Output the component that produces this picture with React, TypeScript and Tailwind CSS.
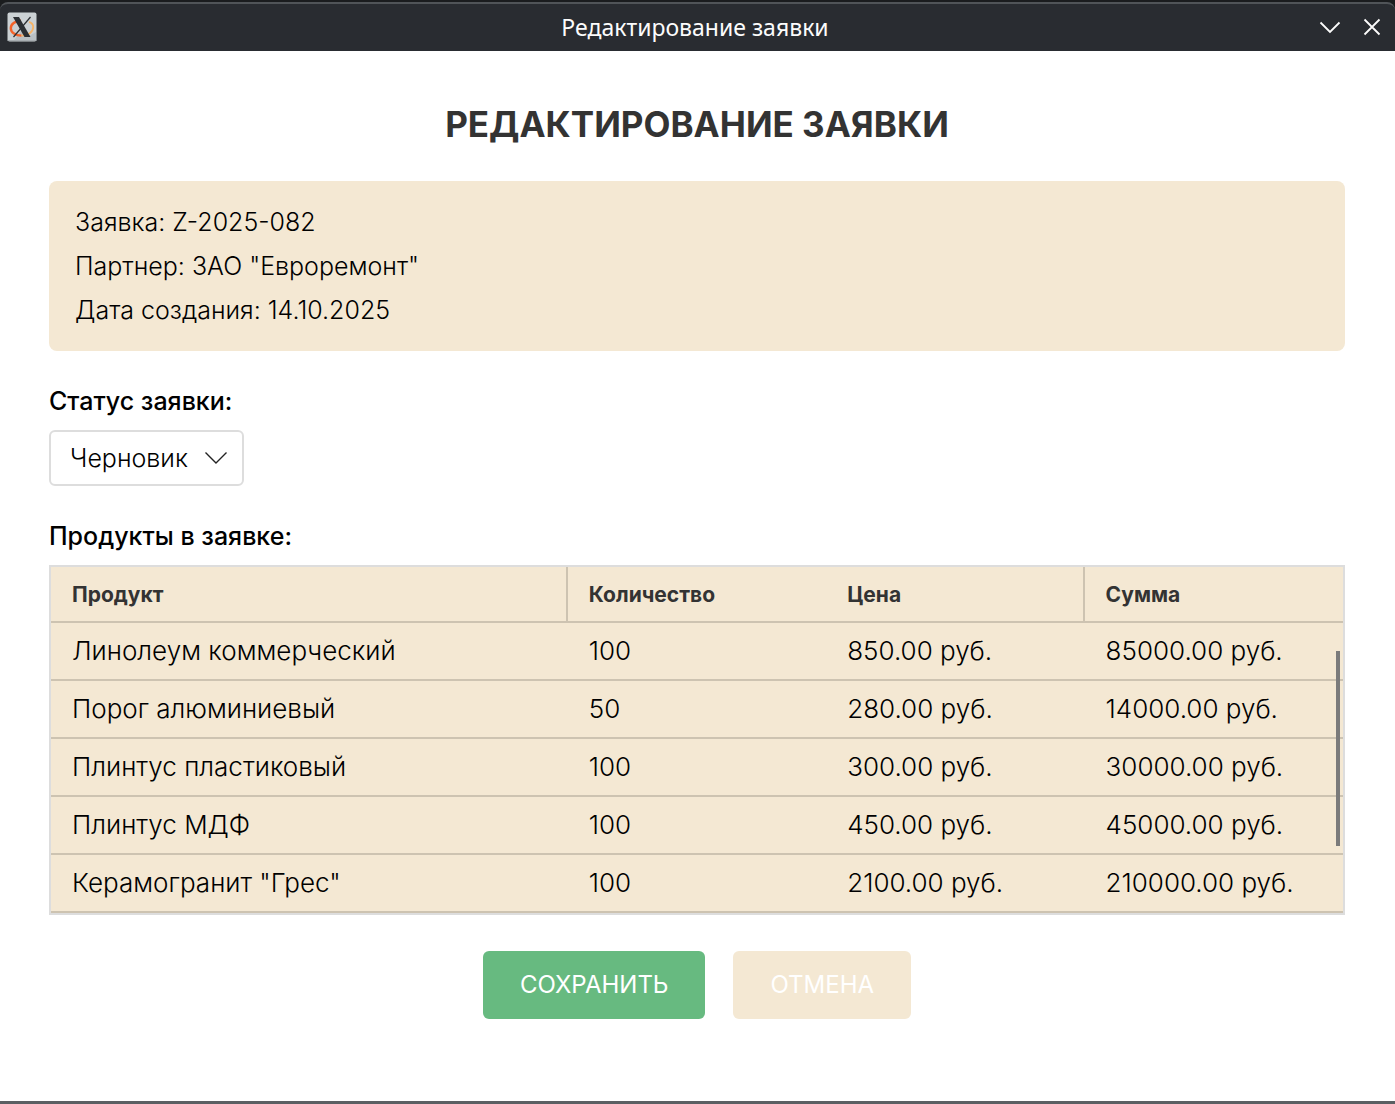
import { useState } from 'react';

const products = [
  { name: 'Линолеум коммерческий', qty: 100, price: '850.00 руб.', sum: '85000.00 руб.' },
  { name: 'Порог алюминиевый', qty: 50, price: '280.00 руб.', sum: '14000.00 руб.' },
  { name: 'Плинтус пластиковый', qty: 100, price: '300.00 руб.', sum: '30000.00 руб.' },
  { name: 'Плинтус МДФ', qty: 100, price: '450.00 руб.', sum: '45000.00 руб.' },
  { name: 'Керамогранит "Грес"', qty: 100, price: '2100.00 руб.', sum: '210000.00 руб.' },
];

function AppIcon() {
  return (
    <svg viewBox="0 0 30 30" className="size-[30px]" aria-hidden="true">
      <rect x="0.5" y="0.5" width="29" height="29" rx="2" fill="#cbd1d4" />
      <path d="M7 28 L15 18 L22 24 L29 20 V29 H6 Z" fill="#b9c0c4" />
      <path d="M0.5 28.5h29" stroke="#a7adb1" />
      <path d="M14 8.8 C8 8.8 3.8 12 3.8 16.2 C3.8 20.6 8.5 23.6 14.5 23.6" fill="none" stroke="#f4632a" strokeWidth="2.4" />
      <path d="M14.5 23.6 C21 23.6 26.2 20 26.2 15 C26.2 12.3 24.6 10.6 22 9.8" fill="none" stroke="#f6b467" strokeWidth="1.8" />
      <path d="M6 5h6l11.5 20h-6z" fill="#2b2f33" />
      <path d="M23.5 5 L6.5 25" stroke="#2b2f33" strokeWidth="1.2" />
    </svg>
  );
}

function TitleBar() {
  return (
    <div className="bg-[#1a1c1e] pt-0.5">
      <header className="grid h-[49px] grid-cols-[1fr_auto_1fr] items-center rounded-t-lg border-t-2 border-[#505458] bg-[#292c31] pr-3 pb-0.5 pl-[7px]">
        <AppIcon />
        <span className="font-['Noto_Sans'] text-[23px] leading-8 font-normal text-[#fcfcfc]">Редактирование заявки</span>
        <div className="flex justify-end gap-5">
          <button type="button" aria-label="Свернуть" className="text-[#fcfcfc]">
            <svg viewBox="0 0 22 22" className="size-[22px]" fill="none" stroke="currentColor" strokeWidth="1.8">
              <path d="M1.5 6.5 L11 16 L20.5 6.5" />
            </svg>
          </button>
          <button type="button" aria-label="Закрыть" className="text-[#fcfcfc]">
            <svg viewBox="0 0 22 22" className="size-[22px]" fill="none" stroke="currentColor" strokeWidth="1.8">
              <path d="M3.5 3.5 L18.5 18.5 M18.5 3.5 L3.5 18.5" />
            </svg>
          </button>
        </div>
      </header>
    </div>
  );
}

export default function App() {
  const [status, setStatus] = useState('Черновик');
  return (
    <div className="flex min-h-screen flex-col border-b-3 border-[#5b5f63] bg-white font-['Inter',sans-serif] text-[25px] leading-8 font-light text-black">
      <TitleBar />
      <main className="flex-1 px-[50px] pt-[49px] pl-[49px]">
        <h1 className="text-center text-[35px] leading-12 font-bold text-[#333333]">РЕДАКТИРОВАНИЕ ЗАЯВКИ</h1>

        <section className="mt-[33px] flex flex-col gap-3 rounded-lg bg-[#f4e8d3] px-[26px] py-[25px]">
          <p>Заявка: Z-2025-082</p>
          <p>Партнер: ЗАО "Евроремонт"</p>
          <p>Дата создания: 14.10.2025</p>
        </section>

        <label htmlFor="status" className="mt-[34px] block font-medium">
          Статус заявки:
        </label>
        <div className="relative mt-[13px] w-fit">
          <select
            id="status"
            value={status}
            onChange={(e) => setStatus(e.target.value)}
            className="block h-14 appearance-none rounded-md border-2 border-[#dddddd] bg-white pr-[54px] pl-[19px]"
          >
            <option>Черновик</option>
          </select>
          <svg viewBox="0 0 24 14" className="pointer-events-none absolute top-[21px] right-4 h-[14px] w-6" fill="none" stroke="#222222" strokeWidth="1.4" aria-hidden="true">
            <path d="M1.5 1.5 L12 12 L22.5 1.5" />
          </svg>
        </div>

        <h2 id="products" className="mt-[34px] font-medium">
          Продукты в заявке:
        </h2>
        <div className="relative mt-[13px] border-2 border-[#dddddd] bg-[#f4e8d3]">
          <table aria-labelledby="products" className="w-full table-fixed border-separate border-spacing-0 text-left">
            <thead>
              <tr className="h-14 text-[21px] text-[#333333]">
                <th className="w-2/5 border-r-2 border-b-2 border-[#cdc3b1] pt-0.5 pb-0 pl-[21px] font-bold">Продукт</th>
                <th className="w-1/5 border-b-2 border-[#cdc3b1] pt-0.5 pb-0 pl-[21px] font-bold">Количество</th>
                <th className="w-1/5 border-r-2 border-b-2 border-[#cdc3b1] pt-0.5 pb-0 pl-[21px] font-bold">Цена</th>
                <th className="w-1/5 border-b-2 border-[#cdc3b1] pt-0.5 pb-0 pl-[21px] font-bold">Сумма</th>
              </tr>
            </thead>
            <tbody className="text-[26px]">
              {products.map((p) => (
                <tr key={p.name} className="h-[58px]">
                  <td className="border-b-2 border-[#cdc3b1] p-0 pl-[21px]">{p.name}</td>
                  <td className="border-b-2 border-[#cdc3b1] p-0 pl-[21px]">{p.qty}</td>
                  <td className="border-b-2 border-[#cdc3b1] p-0 pl-[21px]">{p.price}</td>
                  <td className="border-b-2 border-[#cdc3b1] p-0 pl-[21px]">{p.sum}</td>
                </tr>
              ))}
            </tbody>
          </table>
          <div className="absolute top-[84px] right-[3px] h-[195px] w-1 bg-[#7b7b7b]" />
        </div>

        <div className="mt-9 flex justify-center gap-7">
          <button type="button" className="h-[68px] rounded-md bg-[#67ba80] px-[37px] text-2xl font-normal text-white">
            СОХРАНИТЬ
          </button>
          <button type="button" className="h-[68px] rounded-md bg-[#f4e8d3] px-[37px] text-2xl font-normal text-white">
            ОТМЕНА
          </button>
        </div>
      </main>
    </div>
  );
}
